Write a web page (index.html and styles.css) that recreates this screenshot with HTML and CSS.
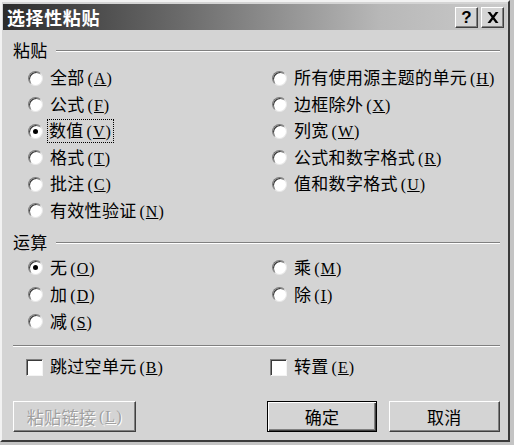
FILE: index.html
```html
<!DOCTYPE html>
<html lang="zh-CN">
<head>
<meta charset="utf-8">
<title>选择性粘贴</title>
<link rel="stylesheet" href="styles.css">
</head>
<body>
<div class="window">
  <div class="titlebar">
    <span class="title">选择性粘贴</span>
    <div class="tbtns">
      <span class="tbtn help">?</span>
      <span class="tbtn close"><svg width="12" height="11" viewBox="0 0 12 11"><path d="M0.5 0h2.8l2.7 3.6L8.7 0h2.8L7.4 5.5l4.1 5.5H8.7L6 7.4 3.3 11H0.5l4.1-5.5z" fill="#000"/></svg></span>
    </div>
  </div>
  <div class="content">
    <div class="group-head"><span class="glabel">粘贴</span><span class="gline"></span></div>
    <div class="opts paste">
      <div class="opt"><span class="radio"></span><span class="lbl">全部<span class="mn">(<u>A</u>)</span></span></div>
      <div class="opt"><span class="radio"></span><span class="lbl">所有使用源主题的单元<span class="mn">(<u>H</u>)</span></span></div>
      <div class="opt"><span class="radio"></span><span class="lbl">公式<span class="mn">(<u>F</u>)</span></span></div>
      <div class="opt"><span class="radio"></span><span class="lbl">边框除外<span class="mn">(<u>X</u>)</span></span></div>
      <div class="opt"><span class="radio checked"></span><span class="lbl focus">数值<span class="mn">(<u>V</u>)</span></span></div>
      <div class="opt"><span class="radio"></span><span class="lbl">列宽<span class="mn">(<u>W</u>)</span></span></div>
      <div class="opt"><span class="radio"></span><span class="lbl">格式<span class="mn">(<u>T</u>)</span></span></div>
      <div class="opt"><span class="radio"></span><span class="lbl">公式和数字格式<span class="mn">(<u>R</u>)</span></span></div>
      <div class="opt"><span class="radio"></span><span class="lbl">批注<span class="mn">(<u>C</u>)</span></span></div>
      <div class="opt"><span class="radio"></span><span class="lbl">值和数字格式<span class="mn">(<u>U</u>)</span></span></div>
      <div class="opt"><span class="radio"></span><span class="lbl">有效性验证<span class="mn">(<u>N</u>)</span></span></div>
    </div>
    <div class="group-head op-head"><span class="glabel">运算</span><span class="gline"></span></div>
    <div class="opts ops">
      <div class="opt"><span class="radio checked"></span><span class="lbl">无<span class="mn">(<u>O</u>)</span></span></div>
      <div class="opt"><span class="radio"></span><span class="lbl">乘<span class="mn">(<u>M</u>)</span></span></div>
      <div class="opt"><span class="radio"></span><span class="lbl">加<span class="mn">(<u>D</u>)</span></span></div>
      <div class="opt"><span class="radio"></span><span class="lbl">除<span class="mn">(<u>I</u>)</span></span></div>
      <div class="opt"><span class="radio"></span><span class="lbl">减<span class="mn">(<u>S</u>)</span></span></div>
    </div>
    <div class="sep"></div>
    <div class="checks">
      <div class="chk"><span class="box"></span><span class="lbl">跳过空单元<span class="mn">(<u>B</u>)</span></span></div>
      <div class="chk"><span class="box"></span><span class="lbl">转置<span class="mn">(<u>E</u>)</span></span></div>
    </div>
    <div class="buttons">
      <span class="btn disabled link">粘贴链接<span class="mn">(<u>L</u>)</span></span>
      <span class="btn default ok">确定</span>
      <span class="btn cancel">取消</span>
    </div>
  </div>
</div>
</body>
</html>
```

FILE: styles.css
```css
html, body {
  margin: 0;
  padding: 0;
  background: #c4c4c4;
}
body {
  width: 514px;
  height: 445px;
  overflow: hidden;
  font-family: "Noto Sans CJK SC", "Liberation Sans", sans-serif;
  color: #000;
}
.window {
  box-sizing: border-box;
  width: 510px;
  height: 442px;
  background: #d4d4d4;
  border-style: solid;
  border-width: 2px;
  border-color: #f2f2f2 #3a3a3a #3a3a3a #f2f2f2;
  padding: 2px 1px 0 1px;
  display: flex;
  flex-direction: column;
}
.titlebar {
  height: 26px;
  background: linear-gradient(to right, #2c2c2c 0%, #6a6a6a 35%, #b8b8b8 75%, #cacaca 100%);
  display: flex;
  align-items: center;
  justify-content: space-between;
  padding: 0 3px 0 4px;
}
.title {
  color: #fff;
  font-weight: bold;
  font-size: 18px;
  letter-spacing: 0.6px;
  line-height: 20px;
}
.tbtns {
  display: flex;
  gap: 3px;
}
.tbtn {
  box-sizing: border-box;
  width: 23px;
  height: 21px;
  background: #d4d4d4;
  border-style: solid;
  border-width: 1px;
  border-color: #fff #404040 #404040 #fff;
  box-shadow: inset -1px -1px 0 #808080;
  display: flex;
  align-items: center;
  justify-content: center;
  font-family: "Liberation Sans", sans-serif;
  font-weight: bold;
  font-size: 17px;
  line-height: 1;
}
.content {
  padding: 0 7px 0 10px;
  display: flex;
  flex-direction: column;
}
.group-head {
  display: flex;
  align-items: center;
  height: 20px;
  margin-top: 10px;
  gap: 8px;
}
.glabel {
  font-size: 17px;
  letter-spacing: 0.3px;
  line-height: 20px;
}
.gline {
  flex: 1;
  height: 0;
  border-top: 1px solid #808080;
  border-bottom: 1px solid #fff;
  margin-top: 1px;
}
.opts {
  display: grid;
  grid-template-columns: 244px 1fr;
  padding-left: 15px;
}
.paste {
  margin-top: 5px;
  grid-auto-rows: 26.5px;
}
.op-head {
  margin-top: 8px;
}
.ops {
  margin-top: 2px;
  grid-auto-rows: 27px;
}
.opt, .chk {
  display: flex;
  align-items: center;
}
.radio {
  box-sizing: border-box;
  position: relative;
  width: 15px;
  height: 15px;
  border-radius: 50%;
  background: #fff;
  border: 1px solid;
  border-color: #7a7a7a #e8e8e8 #e8e8e8 #7a7a7a;
  box-shadow: inset 1px 1px 0 #3a3a3a;
  flex: none;
}
.radio.checked::after {
  content: "";
  position: absolute;
  left: 4px;
  top: 4px;
  width: 5px;
  height: 5px;
  border-radius: 50%;
  background: #000;
}
.lbl {
  font-size: 17px;
  letter-spacing: 0.3px;
  line-height: 20px;
  margin-left: 7px;
  white-space: nowrap;
}
.mn {
  font-family: "Liberation Serif", serif;
  font-size: 16px;
  letter-spacing: 1px;
  margin-left: 3px;
}
.focus {
  outline: 1px dotted #000;
  outline-offset: 0;
  padding: 0 1px;
  margin-left: 5px;
}
.sep {
  margin-top: 10px;
  height: 0;
  border-top: 1px solid #808080;
  border-bottom: 1px solid #fff;
}
.checks {
  display: grid;
  grid-template-columns: 244px 1fr;
  padding-left: 13px;
  margin-top: 9px;
  height: 20px;
}
.box {
  box-sizing: border-box;
  width: 17px;
  height: 17px;
  background: #fff;
  border: 1px solid;
  border-color: #808080 #f4f4f4 #f4f4f4 #808080;
  box-shadow: inset 1px 1px 0 #3a3a3a;
  flex: none;
}
.buttons {
  display: flex;
  margin-top: 25px;
}
.btn {
  box-sizing: border-box;
  height: 31px;
  background: #d4d4d4;
  border-style: solid;
  border-width: 1px;
  border-color: #fff #404040 #404040 #fff;
  box-shadow: inset -1px -1px 0 #808080;
  display: flex;
  align-items: center;
  justify-content: center;
  font-size: 17px;
  letter-spacing: 0.3px;
}
.link {
  width: 124px;
  color: #a0a0a0;
  text-shadow: 1px 1px 0 #fff;
}
.ok {
  width: 110px;
  margin-left: 131px;
}
.btn.default {
  border: 1px solid #000;
  box-shadow: inset 1px 1px 0 #fff, inset -1px -1px 0 #404040, inset -2px -2px 0 #808080;
}
.cancel {
  width: 112px;
  margin-left: 12px;
}
```
